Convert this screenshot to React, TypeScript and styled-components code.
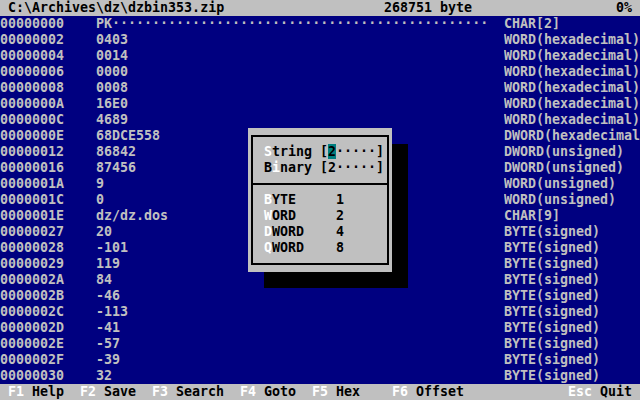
import React from "react";
import styled, { createGlobalStyle } from "styled-components";

const BLUE = "#000080";
const GRAY = "#c0c0c0";

const GlobalStyle = createGlobalStyle`
  html, body { margin: 0; padding: 0; background: ${BLUE}; }
  body { font-family: "DejaVu Sans Mono", "Liberation Mono", monospace; }
`;

const Screen = styled.div`
  position: relative;
  width: 640px;
  height: 400px;
  overflow: hidden;
  display: flex;
  flex-direction: column;
  font-size: 13.3px;
  line-height: 16px;
  font-weight: bold;
  white-space: pre;
`;

const TopBar = styled.div`
  height: 16px;
  background: ${GRAY};
  color: #000;
  display: grid;
  grid-template-columns: 376px 232px 16px;
  padding: 0 8px;
`;

const List = styled.div`
  flex: 1;
  background: ${BLUE};
  color: ${GRAY};
  display: flex;
  flex-direction: column;
`;

const Row = styled.div`
  height: 16px;
  display: grid;
  grid-template-columns: 96px 408px 136px;
`;

const Cell = styled.span`
  overflow: hidden;
`;

const BottomBar = styled.div`
  height: 16px;
  background: ${GRAY};
  display: flex;
  padding: 0 8px;
`;

const FItem = styled.span<{ $cols?: number }>`
  ${(p) => (p.$cols ? `width: ${p.$cols * 8}px;` : "flex: 1;")}
`;

const Key = styled.span`
  color: #fff;
`;

const Label = styled.span`
  color: #000;
`;

const Dialog = styled.div`
  position: absolute;
  left: 248px;
  top: 128px;
  width: 144px;
  height: 144px;
  box-sizing: border-box;
  padding: 7px 3px;
  background: ${GRAY};
  box-shadow: 16px 16px 0 0 #000;
`;

const Frame = styled.div`
  height: 100%;
  box-sizing: border-box;
  border: 2px solid #000;
  padding: 7px 0;
  display: flex;
  flex-direction: column;
`;

const DlgLine = styled.div`
  height: 16px;
  padding-left: 11px;
  color: #000;
`;

const Divider = styled.div`
  height: 2px;
  margin: 7px 0;
  background: #000;
`;

const Hot = styled.span`
  color: #fff;
`;

const Cursor = styled.span`
  background: #008080;
  color: #000;
`;

const rows: [string, string, string][] = [
  ["00000000", "PK" + "\u00b7".repeat(47), "CHAR[2]"],
  ["00000002", "0403", "WORD(hexadecimal)"],
  ["00000004", "0014", "WORD(hexadecimal)"],
  ["00000006", "0000", "WORD(hexadecimal)"],
  ["00000008", "0008", "WORD(hexadecimal)"],
  ["0000000A", "16E0", "WORD(hexadecimal)"],
  ["0000000C", "4689", "WORD(hexadecimal)"],
  ["0000000E", "68DCE558", "DWORD(hexadecimal"],
  ["00000012", "86842", "DWORD(unsigned)"],
  ["00000016", "87456", "DWORD(unsigned)"],
  ["0000001A", "9", "WORD(unsigned)"],
  ["0000001C", "0", "WORD(unsigned)"],
  ["0000001E", "dz/dz.dos", "CHAR[9]"],
  ["00000027", "20", "BYTE(signed)"],
  ["00000028", "-101", "BYTE(signed)"],
  ["00000029", "119", "BYTE(signed)"],
  ["0000002A", "84", "BYTE(signed)"],
  ["0000002B", "-46", "BYTE(signed)"],
  ["0000002C", "-113", "BYTE(signed)"],
  ["0000002D", "-41", "BYTE(signed)"],
  ["0000002E", "-57", "BYTE(signed)"],
  ["0000002F", "-39", "BYTE(signed)"],
  ["00000030", "32", "BYTE(signed)"],
];

const keys: { k: string; l: string; cols?: number }[] = [
  { k: "F1", l: "Help", cols: 9 },
  { k: "F2", l: "Save", cols: 9 },
  { k: "F3", l: "Search", cols: 11 },
  { k: "F4", l: "Goto", cols: 9 },
  { k: "F5", l: "Hex", cols: 10 },
  { k: "F6", l: "Offset" },
  { k: "Esc", l: "Quit", cols: 8 },
];

const sizes: [string, string, string][] = [
  ["B", "YTE ", "1"],
  ["W", "ORD ", "2"],
  ["D", "WORD", "4"],
  ["Q", "WORD", "8"],
];

export default function App() {
  return (
    <>
      <GlobalStyle />
      <Screen>
        <TopBar>
          <span>C:\Archives\dz\dzbin353.zip</span>
          <span>268751 byte</span>
          <span>0%</span>
        </TopBar>
        <List>
          {rows.map(([o, v, t]) => (
            <Row key={o}>
              <Cell>{o}</Cell>
              <Cell>{v}</Cell>
              <Cell>{t}</Cell>
            </Row>
          ))}
        </List>
        <BottomBar>
          {keys.map((it) => (
            <FItem key={it.k} $cols={it.cols}>
              <Key>{it.k}</Key> <Label>{it.l}</Label>
            </FItem>
          ))}
        </BottomBar>
        <Dialog>
          <Frame>
            <DlgLine>
              <Hot>S</Hot>tring [<Cursor>2</Cursor>{"\u00b7".repeat(5)}]
            </DlgLine>
            <DlgLine>
              B<Hot>i</Hot>nary [2{"\u00b7".repeat(5)}]
            </DlgLine>
            <Divider />
            {sizes.map(([h, r, n]) => (
              <DlgLine key={h}>
                <Hot>{h}</Hot>
                {r}    {n}
              </DlgLine>
            ))}
          </Frame>
        </Dialog>
      </Screen>
    </>
  );
}
